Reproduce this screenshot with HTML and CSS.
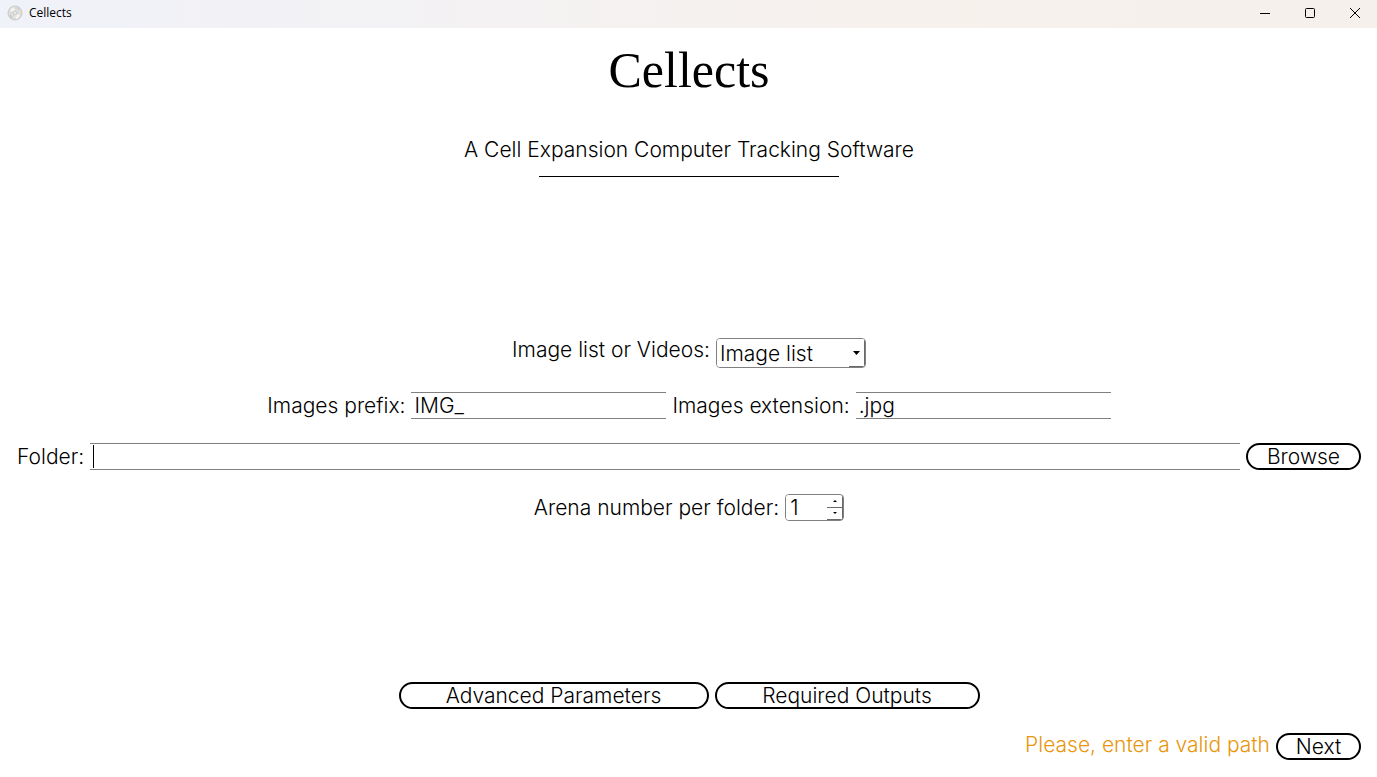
FILE: index.html
```html
<!DOCTYPE html>
<html lang="en">
<head>
<meta charset="utf-8">
<title>Cellects</title>
<link rel="stylesheet" href="styles.css">
</head>
<body>
<header class="titlebar">
  <svg class="app-icon" viewBox="0 0 16 16" aria-hidden="true">
    <circle cx="8" cy="8" r="7" fill="#dededc" stroke="#c9c9c7"/>
    <path d="M3 6a6 6 0 0 1 4-4l1 4-2 1zM13 10a6 6 0 0 1-4 4l-1-4 2-1z" fill="#f3f3f2"/>
    <path d="M10 2.500l2 2M3 10l2 3" stroke="#bcbcba" fill="none"/>
    <circle cx="8" cy="8" r="2" fill="#e9e9e8" stroke="#c8c8c6"/>
  </svg>
  <span class="window-title">Cellects</span>
  <button class="window-button" aria-label="Minimize"><svg viewBox="0 0 12 12"><path d="M1 6.500h10"/></svg></button>
  <button class="window-button" aria-label="Maximize"><svg viewBox="0 0 12 12"><rect x="1.500" y="1.500" width="9" height="9" rx="1"/></svg></button>
  <button class="window-button" aria-label="Close"><svg viewBox="0 0 12 12"><path d="M1 1l10 10M11 1L1 11"/></svg></button>
</header>
<main class="content">
  <h1 class="title">Cellects</h1>
  <p class="subtitle">A Cell Expansion Computer Tracking Software</p>
  <hr class="rule">
  <form class="form">
    <div class="row row-top">
      <label for="kind">Image list or Videos:</label>
      <div class="combo">
        <select id="kind"><option>Image list</option><option>Videos</option></select>
        <span class="combo-arrow"><svg viewBox="0 0 7 4"><path d="M0 0h7L3.500 4z"/></svg></span>
      </div>
    </div>
    <div class="row">
      <label for="prefix">Images prefix:</label>
      <input class="line-edit" id="prefix" type="text" value="IMG_">
      <label for="extension">Images extension:</label>
      <input class="line-edit" id="extension" type="text" value=".jpg">
    </div>
    <div class="row">
      <label for="folder">Folder:</label>
      <div class="folder-field">
        <input class="line-edit line-edit-wide" id="folder" type="text">
        <span class="caret"></span>
      </div>
      <button class="pill pill-browse" type="button">Browse</button>
    </div>
    <div class="row">
      <label for="arenas">Arena number per folder:</label>
      <div class="spin">
        <input id="arenas" type="number" value="1" min="1">
        <div class="spin-buttons">
          <button type="button" aria-label="Increase"><svg viewBox="0 0 4 2"><path d="M0 2h4L2 0z"/></svg></button>
          <button type="button" aria-label="Decrease"><svg viewBox="0 0 4 2"><path d="M0 0h4L2 2z"/></svg></button>
        </div>
      </div>
    </div>
  </form>
  <div class="row">
    <button class="pill pill-advanced" type="button">Advanced Parameters</button>
    <button class="pill pill-outputs" type="button">Required Outputs</button>
  </div>
  <footer class="row row-top row-end">
    <span class="message" role="status">Please, enter a valid path</span>
    <button class="pill pill-next" type="button">Next</button>
  </footer>
</main>
</body>
</html>
```
FILE: styles.css
```css
* { box-sizing: border-box; }

body {
  margin: 0;
  min-height: 100vh;
  display: flex;
  flex-direction: column;
  background: #fff;
  color: #000;
  font-family: "Century Gothic", Inter, sans-serif;
  font-size: 21px;
  font-weight: 300;
  line-height: 26px;
}

input, select, button { font: inherit; color: inherit; }
button { background: none; border: 0; padding: 0; }

.titlebar {
  display: flex;
  align-items: center;
  height: 28px;
  padding: 0 0 3px 7px;
  background: linear-gradient(90deg, #f0f2f9, #f7f1ec 70%, #f5f0ec);
}
.app-icon { width: 16px; height: 16px; margin-right: 6px; }
.window-title {
  flex: 1;
  font: 400 12px/16px "Segoe UI", "Open Sans", sans-serif;
}
.window-button {
  width: 45px;
  height: 24px;
  display: grid;
  place-items: center;
}
.window-button svg {
  width: 12px;
  height: 12px;
  fill: none;
  stroke: #000;
}

.content {
  flex: 1;
  display: flex;
  flex-direction: column;
  padding: 12px 16px 17px 17px;
}
.title {
  margin: 0;
  text-align: center;
  font: 400 50px/60px "Liberation Serif", serif;
}
.subtitle { margin: 37px 0 13px; text-align: center; }
.rule {
  width: 300px;
  height: 1px;
  margin: 0 auto;
  border: 0;
  background: #000;
}
.form {
  flex: 1;
  display: flex;
  flex-direction: column;
  justify-content: center;
  gap: 24px;
}
.row {
  display: flex;
  justify-content: center;
  align-items: center;
  gap: 6px;
}
.row-top { align-items: flex-start; line-height: 24px; }
.row-end { justify-content: flex-end; margin-top: 24px; }

.line-edit {
  width: 255px;
  height: 27px;
  padding: 0 3px;
  border: solid #808080;
  border-width: 1px 0;
  border-radius: 0;
  background: #fff;
  outline: 0;
}
.line-edit-wide { display: block; width: 100%; }
.folder-field { position: relative; flex: 1; }
.caret {
  position: absolute;
  left: 3px;
  top: 2px;
  width: 1px;
  height: 23px;
  background: #000;
}

.combo, .spin {
  position: relative;
  border: 1px solid #808080;
  border-radius: 4px;
  overflow: hidden;
}
.combo { width: 150px; height: 30px; }
.combo select {
  width: 100%;
  height: 28px;
  padding: 2px 3px 0;
  border: 0;
  background: #fff;
  appearance: none;
  outline: 0;
}
.combo-arrow {
  position: absolute;
  right: 0;
  top: 0;
  width: 16px;
  height: 28px;
  display: grid;
  place-items: center;
  border: solid #696969;
  border-width: 0 1px 1px 0;
  pointer-events: none;
}
.combo-arrow svg { width: 7px; height: 4px; }

.spin { display: flex; width: 59px; height: 27px; }
.spin input {
  flex: 1;
  min-width: 0;
  padding: 0 4px;
  border: 0;
  appearance: textfield;
  outline: 0;
}
.spin input::-webkit-inner-spin-button { appearance: none; margin: 0; }
.spin-buttons { display: flex; flex-direction: column; width: 16px; }
.spin-buttons button {
  flex: 1;
  display: grid;
  place-items: center;
  border: solid #696969;
  border-width: 0 1px 1px 0;
}
.spin-buttons svg { width: 4px; height: 2px; }

.pill {
  height: 27px;
  padding-top: 1px;
  border: 2px solid #000;
  border-radius: 14px;
  line-height: 22px;
}
.pill-browse { width: 115px; }
.pill-advanced { width: 310px; }
.pill-outputs { width: 265px; }
.pill-next { width: 85px; }
.message { color: #e8960c; }
```
